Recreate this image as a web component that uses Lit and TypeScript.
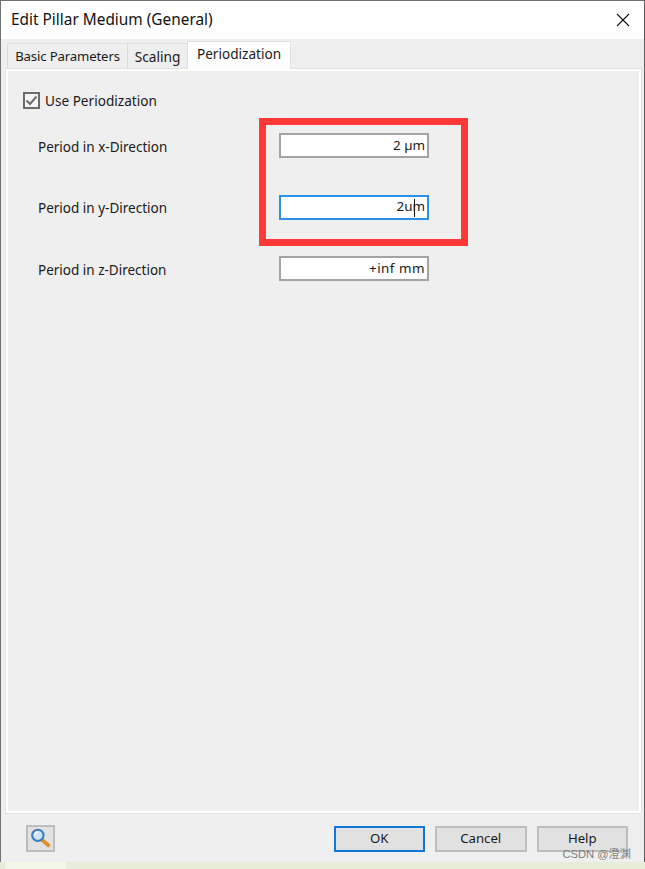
import { LitElement, html, css } from "lit";
import { customElement } from "lit/decorators.js";

@customElement("app-root")
export class AppRoot extends LitElement {
  static styles = css`
    :host { display: block; width: 645px; height: 869px; font-family: "Noto Sans", "Open Sans", sans-serif; color: #1a1a1a; }
    * { box-sizing: border-box; }
    .win { position: relative; width: 645px; height: 869px; background: #efefef; display: flex; flex-direction: column; border-top: 1px solid #6f6f6f; border-left: 1px solid #6f7472; border-right: 1px solid #5b5b5b; }
    .title { flex: none; height: 38px; background: #fff; display: flex; align-items: center; justify-content: space-between; padding: 0 14px 2px 10px; font-size: 15.4px; color: #111; }
    .close { width: 14px; height: 14px; display: block; margin-top: 2px; }
    .tabs { flex: none; display: flex; height: 29px; padding: 0 0 0 6px; align-items: flex-end; }
    .tab { height: 25px; background: #efefef; border: 1px solid #dcdcdc; border-bottom: none; font-size: 13.2px; display: flex; align-items: center; justify-content: center; margin-right: -1px; }
    .t1 { width: 121px; letter-spacing: -0.15px; }
    .t2 { width: 61px; font-size: 13.7px; }
    .t3 { width: 104px; height: 28px; background: #fff; margin-bottom: -1px; position: relative; z-index: 1; border-color: #e0e0e0; font-size: 13.6px; padding-bottom: 4px; }
    .panel { flex: none; margin: 0 2px 0 4px; height: 746px; border: 1px solid #e2e2e2; background: #efefef; box-shadow: inset 2px 2px 0 0 #fff, inset -2px -2px 0 0 #fff; padding: 22px 18px 0 17px; }
    .check { display: flex; align-items: center; gap: 5px; font-size: 13.6px; height: 18px; }
    .box { width: 17px; height: 17px; border: 2px solid #6b6b6b; background: #f6f6f6; display: block; }
    .rows { display: flex; flex-direction: column; gap: 36px; margin-top: 24px; padding-left: 15px; }
    .row { display: flex; align-items: center; height: 25px; font-size: 13.5px; }
    .row + .row { margin-top: 0.5px; }
    .row label { width: 241px; padding-top: 2px; }
    .input { width: 150px; height: 25px; background: #fff; border: 2px solid #a3a3a3; display: flex; align-items: center; justify-content: flex-end; padding: 0 2px 2px 0; font-size: 13.4px; position: relative; }
    .input.wide { letter-spacing: 0.5px; }
    .input.focus { border-color: #2d8fe6; }
    .caret { position: absolute; right: 12px; top: 2px; width: 1px; height: 18px; background: #111; }
    .mark { position: absolute; left: 258px; top: 117px; width: 209px; height: 128px; border: 7px solid #ff3838; }
    .foot { flex: 1; display: flex; align-items: flex-start; padding: 12px 16px 0 25px; }
    .icon { width: 29px; height: 27px; margin-top: -1px; background: #e1e1e1; border: 2px solid #bdbdbd; display: flex; align-items: center; justify-content: center; margin-right: auto; }
    .btn { width: 91.5px; height: 26px; background: #e1e1e1; border: 2px solid #bdbdbd; display: flex; align-items: center; justify-content: center; font-size: 13.2px; margin-left: 10px; padding-bottom: 2px; }
    .btn.def { border-color: #0f78d6; }
    .strip { position: absolute; left: -1px; right: -1px; bottom: 0; height: 7px; background: #e6eed9; display: flex; }
    .strip i { display: block; margin-left: 5px; width: 61px; background: #f1f6e8; }
    .wm { position: absolute; right: 13px; bottom: 8px; font-size: 11.2px; color: rgba(110,110,110,.9); font-family: "Liberation Sans", "Noto Sans CJK SC", sans-serif; }
  `;

  render() {
    return html`<div class="win">
      <div class="title">
        <span>Edit Pillar Medium (General)</span>
        <svg class="close" viewBox="0 0 14 14"><path d="M1 1L13 13M13 1L1 13" stroke="#111" stroke-width="1.1" fill="none"/></svg>
      </div>
      <div class="tabs">
        <div class="tab t1">Basic Parameters</div>
        <div class="tab t2">Scaling</div>
        <div class="tab t3">Periodization</div>
      </div>
      <div class="panel">
        <div class="check">
          <svg class="box" viewBox="0 0 13 13"><path d="M1.5 6.5L5 10L11.5 2.5" stroke="#6b6b6b" stroke-width="2" fill="none"/></svg>
          <span>Use Periodization</span>
        </div>
        <div class="rows">
          <div class="row"><label>Period in x-Direction</label><div class="input">2 µm</div></div>
          <div class="row"><label>Period in y-Direction</label><div class="input focus">2um<span class="caret"></span></div></div>
          <div class="row"><label>Period in z-Direction</label><div class="input wide">+inf mm</div></div>
        </div>
      </div>
      <div class="foot">
        <div class="icon">
          <svg width="22" height="21" viewBox="0 0 21 20">
            <path d="M11 11L17.5 16.5" stroke="#e0912a" stroke-width="3.6" stroke-linecap="round"/>
            <circle cx="7.5" cy="7" r="5.4" fill="#cfe3f6" stroke="#3a7cc4" stroke-width="2"/>
            <path d="M4.6 7a3 3 0 0 1 3-3" stroke="#fff" stroke-width="1.2" fill="none"/>
          </svg>
        </div>
        <div class="btn def">OK</div>
        <div class="btn">Cancel</div>
        <div class="btn">Help</div>
      </div>
      <div class="mark"></div>
      <div class="strip"><i></i></div>
      <div class="wm">CSDN @澄渊</div>
    </div>`;
  }
}
